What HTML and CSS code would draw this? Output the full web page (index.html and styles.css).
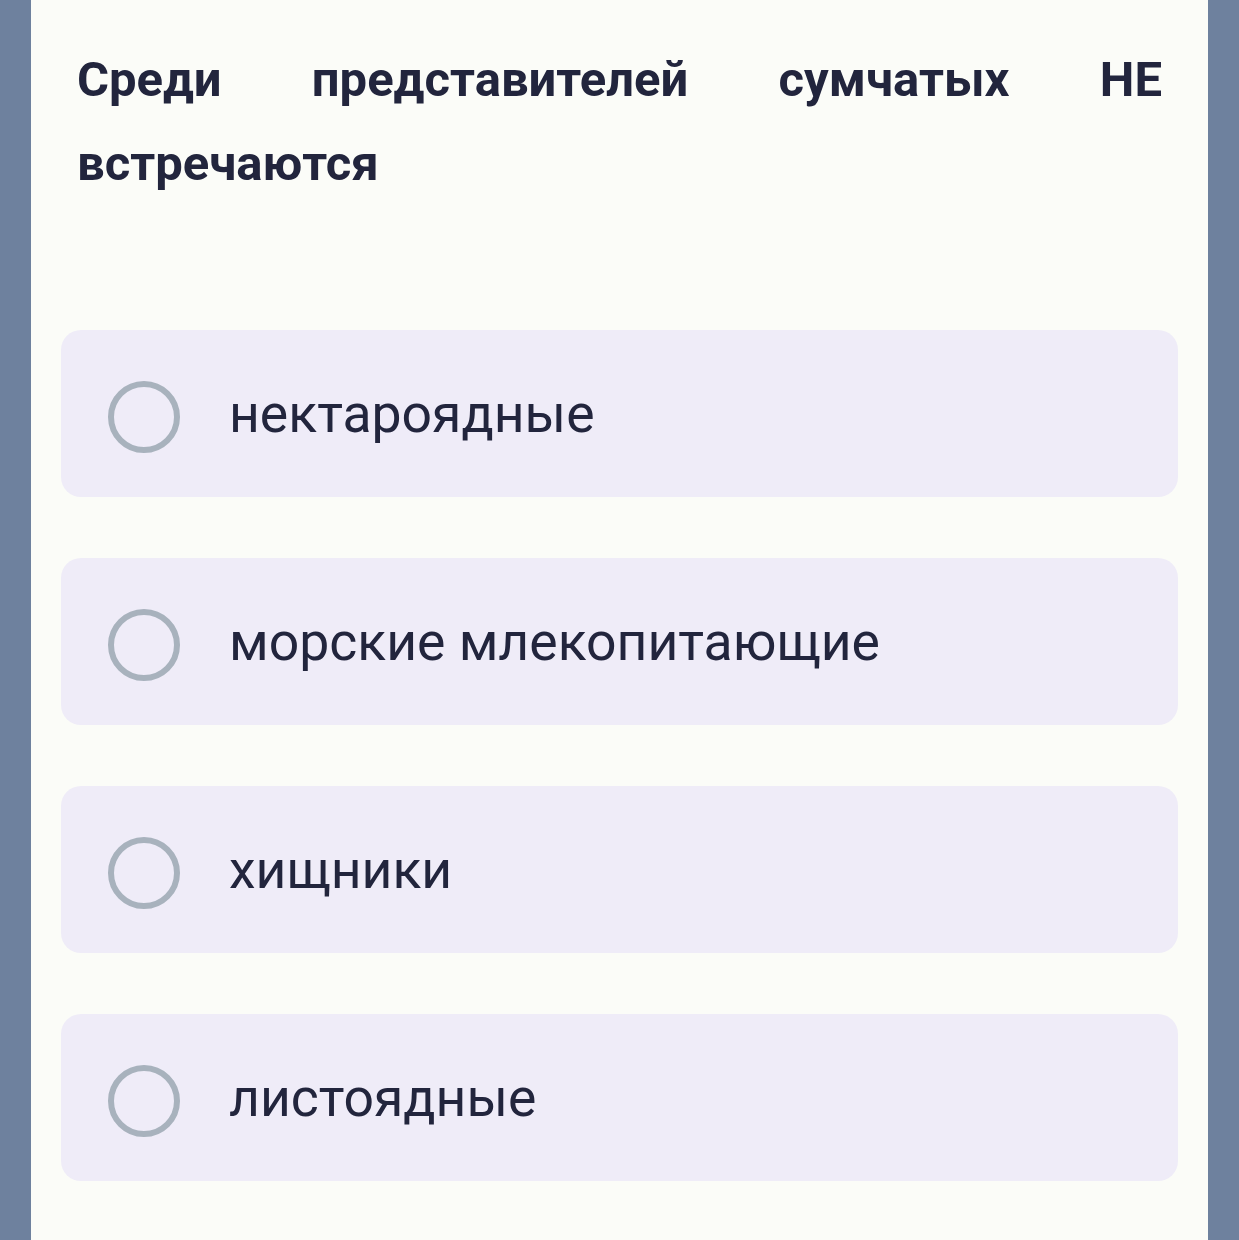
FILE: index.html
```html
<!DOCTYPE html>
<html lang="ru">
<head>
<meta charset="utf-8">
<link rel="stylesheet" href="styles.css">
</head>
<body>
<div class="frame">
  <main class="panel">
    <h1 class="question">Среди представителей сумчатых НЕ встречаются</h1>
    <ul class="options">
      <li class="option"><span class="radio"></span><span class="label">нектароядные</span></li>
      <li class="option"><span class="radio"></span><span class="label">морские млекопитающие</span></li>
      <li class="option"><span class="radio"></span><span class="label">хищники</span></li>
      <li class="option"><span class="radio"></span><span class="label">листоядные</span></li>
    </ul>
  </main>
</div>
</body>
</html>
```
FILE: styles.css
```css
* { box-sizing: border-box; }
html, body { margin: 0; padding: 0; }
body {
  background: #6e819e;
  font-family: Roboto, "Noto Sans", sans-serif;
  color: #22253d;
}
.frame {
  padding: 0 31px;
  height: 1240px;
  overflow: hidden;
}
.panel {
  background: #fbfcf8;
  height: 100%;
  padding: 38px 30px 0 30px;
}
.question {
  margin: 0 16px;
  font-size: 49px;
  font-weight: 700;
  line-height: 84px;
  text-align: justify;
  color: #22253d;
}
.options {
  list-style: none;
  margin: 124px 0 0 0;
  padding: 0;
  display: flex;
  flex-direction: column;
  gap: 61px;
}
.option {
  background: #efecf8;
  border-radius: 20px;
  height: 167px;
  display: flex;
  align-items: center;
  padding-left: 47px;
}
.radio {
  width: 72px;
  height: 72px;
  border: 6px solid #a8b2bd;
  border-radius: 50%;
  flex: none;
  margin-top: 6px;
}
.label {
  margin-left: 49px;
  font-size: 53.5px;
  font-weight: 400;
  color: #22253d;
}
```
